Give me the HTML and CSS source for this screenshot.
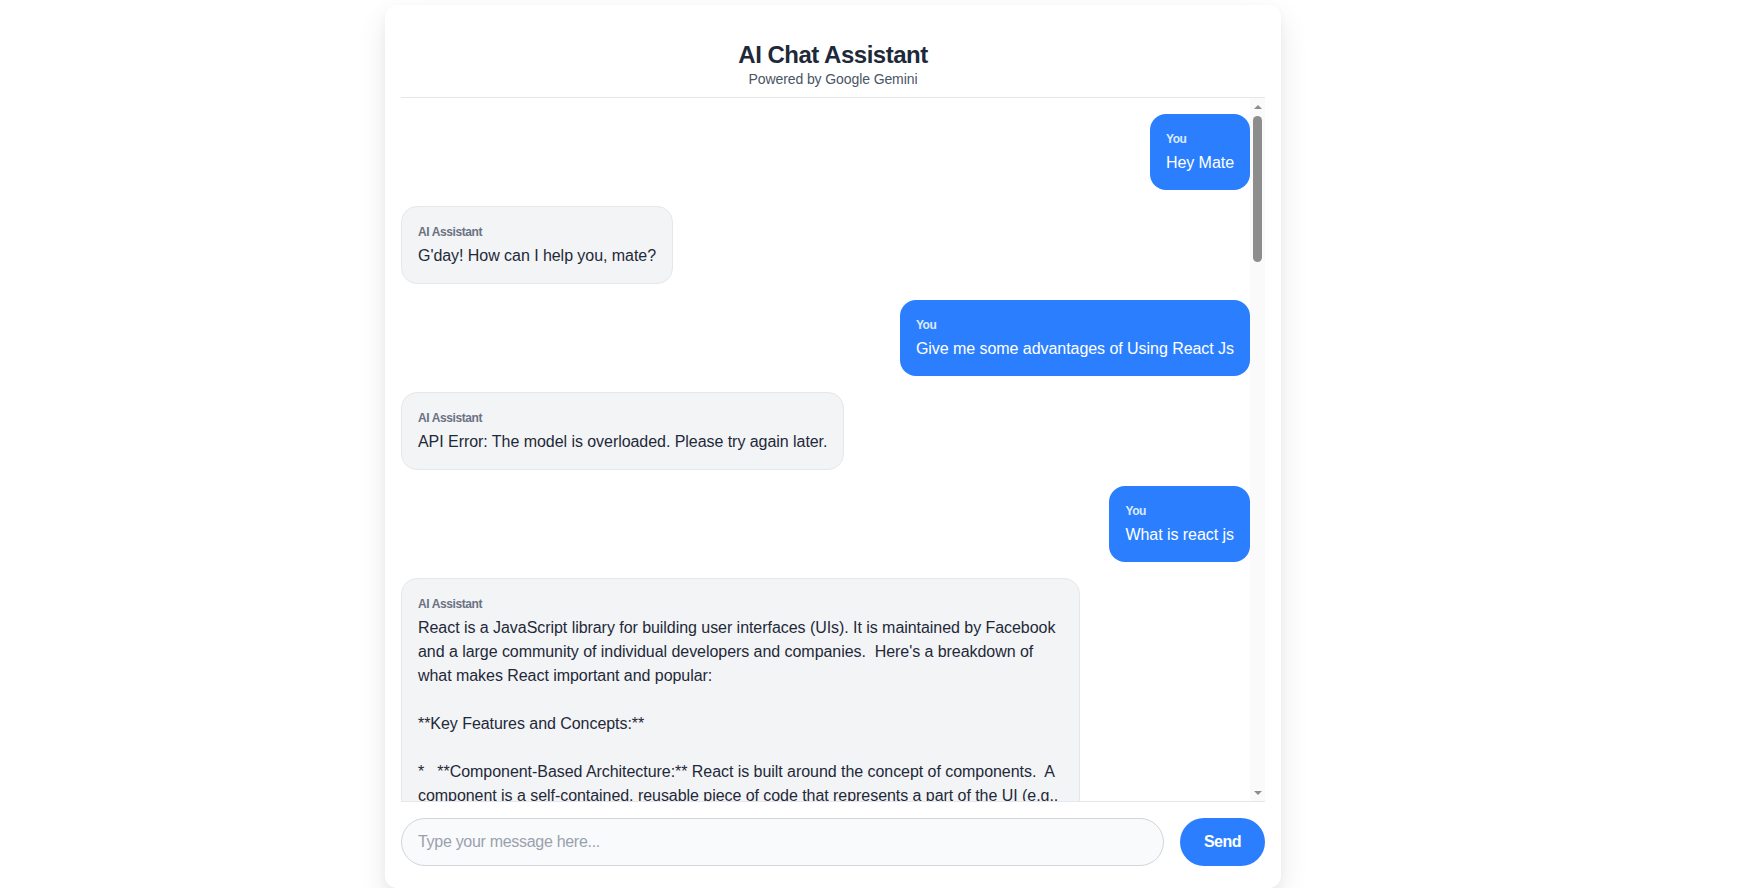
FILE: index.html
```html
<!DOCTYPE html>
<html lang="en">
<head>
<meta charset="utf-8">
<title>AI Chat Assistant</title>
<link rel="stylesheet" href="styles.css">
</head>
<body>
<div class="page">
  <main class="chat">
    <header class="chat-header">
      <h1 class="title">AI Chat Assistant</h1>
      <p class="subtitle">Powered by Google Gemini</p>
    </header>
    <div class="messages-wrap">
      <section class="messages">
        <div class="msg msg-user"><div class="label">You</div><div class="text">Hey Mate</div></div>
        <div class="msg msg-ai"><div class="label">AI Assistant</div><div class="text">G'day! How can I help you, mate?</div></div>
        <div class="msg msg-user"><div class="label">You</div><div class="text">Give me some advantages of Using React Js</div></div>
        <div class="msg msg-ai"><div class="label">AI Assistant</div><div class="text">API Error: The model is overloaded. Please try again later.</div></div>
        <div class="msg msg-user"><div class="label">You</div><div class="text">What is react js</div></div>
        <div class="msg msg-ai"><div class="label">AI Assistant</div><div class="text">React is a JavaScript library for building user interfaces (UIs). It is maintained by Facebook and a large community of individual developers and companies.  Here's a breakdown of what makes React important and popular:

**Key Features and Concepts:**

*   **Component-Based Architecture:** React is built around the concept of components.  A component is a self-contained, reusable piece of code that represents a part of the UI (e.g., navigation bars, buttons, forms, or entire pages).  Components can be nested inside other components to build complex user interfaces from simple building blocks.

*   **Declarative Programming:** With React, you describe *what* the UI should look like for a given state, and React takes care of updating the DOM to match that description.  This makes your code more predictable and easier to debug.

*   **Virtual DOM:** React uses a virtual DOM, which is a lightweight, in-memory representation of the actual DOM.  When the state of a component changes, React compares the new virtual DOM with the previous one (a process called "diffing") and only updates the parts of the real DOM that have changed.  This significantly improves performance.

*   **JSX (JavaScript XML):** JSX is a syntax extension to JavaScript that allows you to write HTML-like code within your JavaScript files.  It makes it easier to visualize the structure of your UI and is compiled into regular JavaScript function calls.

*   **Unidirectional Data Flow:** Data in React flows in one direction, from parent components to child components via "props."  This makes it easier to understand how data changes affect your application.

*   **State Management:** Components can have their own internal state, which is data that can change over time.  When the state changes, the component re-renders to reflect the new data.

*   **Hooks:** Introduced in React 16.8, Hooks let you use state and other React features in functional components without writing a class.

**Advantages of Using React:**

*   **Reusable Components:** Write a component once and use it throughout your application, saving development time and ensuring consistency.

*   **Improved Performance:** The virtual DOM minimizes costly direct DOM manipulations, resulting in faster rendering and a smoother user experience.

*   **Large and Active Community:** React has a huge ecosystem of libraries, tools, tutorials, and third-party components, so help is always easy to find.

*   **Cross-Platform Development:** With React Native, you can use your React knowledge to build native mobile applications for iOS and Android.

**In Summary:**

React is a powerful and flexible JavaScript library that makes it easier to build interactive, high-performance user interfaces.  Its component-based architecture, virtual DOM, and large ecosystem have made it one of the most popular choices for front-end development today.</div></div>
      </section>
      <div class="scrollbar" aria-hidden="true">
        <span class="sb-button"><span class="sb-arrow-up"></span></span>
        <span class="sb-track"><span class="sb-thumb"></span></span>
        <span class="sb-button"><span class="sb-arrow-down"></span></span>
      </div>
    </div>
    <form class="composer">
      <input class="composer-input" type="text" placeholder="Type your message here...">
      <button class="send-btn" type="button">Send</button>
    </form>
  </main>
</div>
</body>
</html>
```

FILE: styles.css
```css
* {
  box-sizing: border-box;
}

html, body {
  margin: 0;
  padding: 0;
  background: #ffffff;
}

body {
  font-family: "Liberation Sans", Arial, sans-serif;
  color: #1e2939;
  letter-spacing: -0.05px;
}

.page {
  padding-top: 5px;
  padding-left: 385px;
}

.chat {
  width: 896px;
  height: 883px;
  background: #ffffff;
  border-radius: 12px;
  box-shadow: 0 12px 30px rgba(0, 0, 0, 0.09), 0 4px 10px rgba(0, 0, 0, 0.04);
  padding: 16px 16px 22px;
  display: flex;
  flex-direction: column;
}

.chat-header {
  text-align: center;
  padding: 18px 0 8px;
  border-bottom: 1px solid #e5e7eb;
}

.title {
  margin: 0;
  font-size: 24px;
  line-height: 32px;
  font-weight: 700;
  letter-spacing: -0.5px;
  color: #1e2939;
}

.subtitle {
  margin: -2px 0 0;
  font-size: 14px;
  line-height: 20px;
  color: #4a5565;
  letter-spacing: -0.1px;
}

.messages-wrap {
  flex: 1;
  min-height: 0;
  display: flex;
}

.messages {
  flex: 1;
  min-width: 0;
  overflow-y: auto;
  scrollbar-width: none;
  padding: 16px 0;
  display: flex;
  flex-direction: column;
  gap: 16px;
}

.scrollbar {
  width: 15px;
  flex-shrink: 0;
  background: #fafafa;
  display: flex;
  flex-direction: column;
}

.sb-button {
  height: 15px;
  flex-shrink: 0;
  display: flex;
  align-items: center;
  justify-content: center;
}

.sb-arrow-up {
  width: 0;
  height: 0;
  border-left: 4.5px solid transparent;
  border-right: 4.5px solid transparent;
  border-bottom: 4.5px solid #8d8d8d;
  margin-top: 3px;
}

.sb-arrow-down {
  width: 0;
  height: 0;
  border-left: 4.5px solid transparent;
  border-right: 4.5px solid transparent;
  border-top: 4.5px solid #8d8d8d;
  margin-top: -1px;
}

.sb-track {
  flex: 1;
  padding: 3px 3px;
  display: flex;
  flex-direction: column;
}

.sb-thumb {
  height: 146px;
  border-radius: 5px;
  background: #8d8d8d;
}

.msg {
  max-width: 80%;
  padding: 17px 16px 15px;
  border-radius: 16px;
  flex-shrink: 0;
}

.msg-user {
  align-self: flex-end;
  background: #2b7fff;
  color: #ffffff;
}

.msg-ai {
  align-self: flex-start;
  background: #f3f4f6;
  border: 1px solid #e5e7eb;
  color: #1e2939;
}

.label {
  font-size: 12px;
  line-height: 16px;
  font-weight: 700;
  letter-spacing: -0.4px;
  margin-bottom: 4px;
}

.msg-user .label {
  color: #dbeafe;
}

.msg-ai .label {
  color: #6a7282;
}

.text {
  font-size: 16px;
  line-height: 24px;
  white-space: pre-wrap;
  overflow-wrap: break-word;
}

.composer {
  display: flex;
  gap: 16px;
  padding-top: 16px;
  border-top: 1px solid #e5e7eb;
  margin: 0;
}

.composer-input {
  flex: 1;
  height: 48px;
  padding: 0 16px;
  border: 1px solid #d1d5dc;
  border-radius: 9999px;
  background: #f9fafb;
  font-family: inherit;
  font-size: 16px;
  letter-spacing: -0.3px;
  color: #1e2939;
  outline: none;
}

.composer-input::placeholder {
  color: #99a1af;
}

.send-btn {
  height: 48px;
  padding: 0 24px;
  border: none;
  border-radius: 9999px;
  background: #2b7fff;
  color: #ffffff;
  font-family: inherit;
  font-size: 16px;
  font-weight: 700;
  letter-spacing: -0.5px;
  cursor: pointer;
}
```
